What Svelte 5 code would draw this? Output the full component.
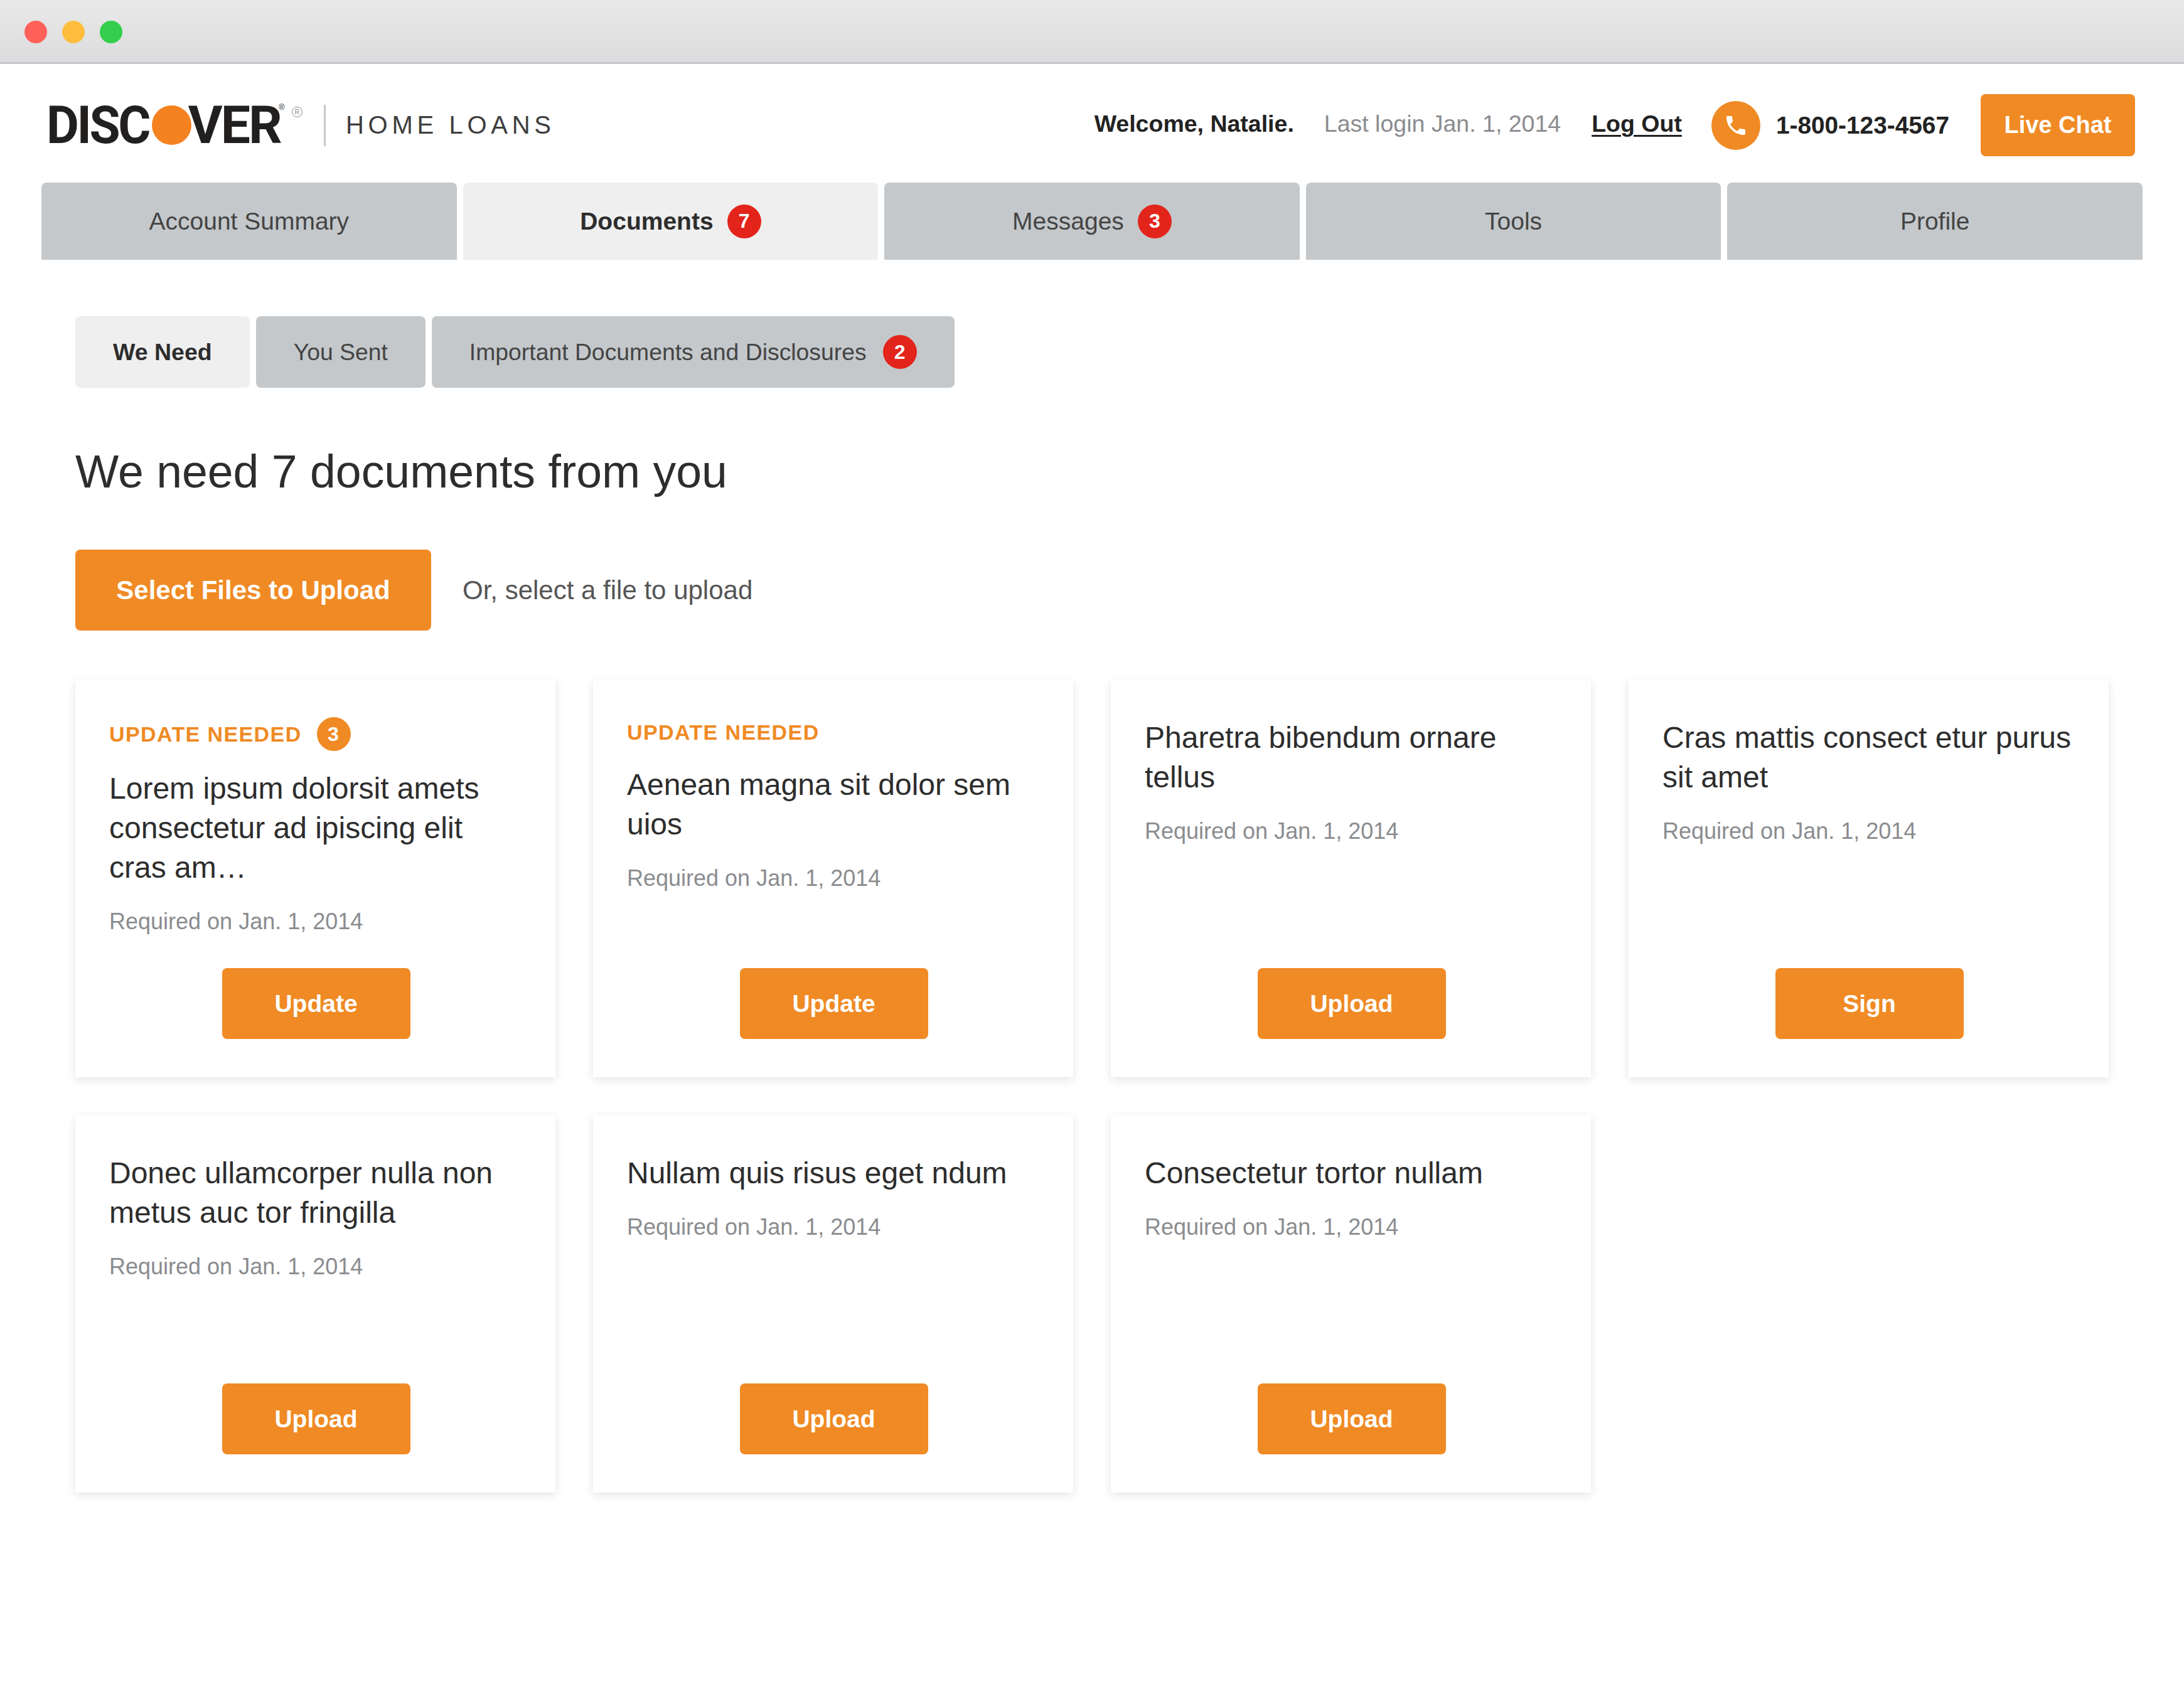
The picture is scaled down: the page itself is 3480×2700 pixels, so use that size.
<script>
	const mainTabs = [
		{ title: 'Account Summary' },
		{ title: 'Documents', count: 7, active: true },
		{ title: 'Messages', count: 3 },
		{ title: 'Tools' },
		{ title: 'Profile' }
	];

	const subTabs = [
		{ title: 'We Need', active: true },
		{ title: 'You Sent' },
		{ title: 'Important Documents and Disclosures', count: 2 }
	];

	const docs = [
		{ flag: true, flagCount: 3, title: 'Lorem ipsum dolorsit amets consectetur ad ipiscing elit cras am…', action: 'Update' },
		{ flag: true, title: 'Aenean magna sit dolor sem uios', action: 'Update' },
		{ title: 'Pharetra bibendum ornare tellus', action: 'Upload' },
		{ title: 'Cras mattis consect etur purus sit amet', action: 'Sign' },
		{ title: 'Donec ullamcorper nulla non metus auc tor fringilla', action: 'Upload' },
		{ title: 'Nullam quis risus eget ndum', action: 'Upload' },
		{ title: 'Consectetur tortor nullam', action: 'Upload' }
	];
</script>

<div class="titlebar">
	<span class="dot red"></span>
	<span class="dot yellow"></span>
	<span class="dot green"></span>
</div>

<header>
	<div class="brand">
		<div class="logo">
			<span class="word">DISC</span>
			<span class="ball"></span>
			<span class="word ver">VER</span>
			<span class="reg-small">®</span>
			<span class="reg">R</span>
		</div>
		<span class="home">HOME LOANS</span>
	</div>
	<div class="account">
		<strong class="welcome">Welcome, Natalie.</strong>
		<span class="login">Last login Jan. 1, 2014</span>
		<a class="logout" href="#top">Log Out</a>
		<span class="phone-icon">
			<svg viewBox="0 0 24 24" width="40" height="40"><path fill="#fff" d="M6.62 10.79c1.44 2.83 3.76 5.14 6.59 6.59l2.2-2.2c.27-.27.67-.36 1.02-.24 1.12.37 2.33.57 3.57.57.55 0 1 .45 1 1V20c0 .55-.45 1-1 1-9.39 0-17-7.61-17-17 0-.55.45-1 1-1h3.5c.55 0 1 .45 1 1 0 1.25.2 2.45.57 3.57.11.35.03.74-.25 1.02l-2.2 2.2z"/></svg>
		</span>
		<strong class="number">1-800-123-4567</strong>
		<button class="btn chat">Live Chat</button>
	</div>
</header>

<nav class="tabs">
	{#each mainTabs as tab}
		<div class="tab" class:active={tab.active}>
			<span>{tab.title}</span>
			{#if tab.count}<span class="count">{tab.count}</span>{/if}
		</div>
	{/each}
</nav>

<main>
	<div class="subtabs">
		{#each subTabs as tab}
			<div class="subtab" class:active={tab.active}>
				<span>{tab.title}</span>
				{#if tab.count}<span class="count">{tab.count}</span>{/if}
			</div>
		{/each}
	</div>

	<h1>We need 7 documents from you</h1>

	<div class="upload-row">
		<button class="btn select">Select Files to Upload</button>
		<span class="hint">Or, select a file to upload</span>
	</div>

	<div class="cards">
		{#each docs as doc}
			<article class="card">
				{#if doc.flag}
					<div class="flag" class:tall={doc.flagCount}>
						<span>UPDATE NEEDED</span>
						{#if doc.flagCount}<span class="count orange">{doc.flagCount}</span>{/if}
					</div>
				{/if}
				<h2>{doc.title}</h2>
				<p>Required on Jan. 1, 2014</p>
				<button class="btn action">{doc.action}</button>
			</article>
		{/each}
	</div>
</main>

<style>
	:global(body) {
		margin: 0;
		background: #fff;
		font-family: "Liberation Sans", Arial, sans-serif;
		color: #2d2d2d;
	}

	.titlebar {
		height: 96px;
		display: flex;
		align-items: center;
		gap: 24px;
		padding: 3px 0 0 39px;
		background: linear-gradient(#e9e9e9, #dcdcde);
		border-bottom: 3px solid #c8c8ca;
	}

	.dot {
		width: 36px;
		height: 36px;
		border-radius: 50%;
	}

	.red { background: #ff6159; }
	.yellow { background: #ffbd3e; }
	.green { background: #33cf4d; }

	header {
		display: flex;
		justify-content: space-between;
		align-items: center;
		padding: 48px 78px 42px 78px;
	}

	.brand {
		display: flex;
		align-items: center;
	}

	.logo {
		display: flex;
		align-items: center;
		position: relative;
		width: 441px;
		height: 66px;
		border-right: 3px solid #c8c8c8;
		box-sizing: border-box;
	}

	.word {
		margin: 0 -9px 0 -4px;
		font-family: Roboto, sans-serif;
		font-weight: 700;
		font-size: 84px;
		line-height: 66px;
		letter-spacing: -3.5px;
		color: #221f1f;
		transform: scaleX(0.95);
		transform-origin: left center;
	}

	.word.ver {
		margin: 0 0 0 -5px;
		letter-spacing: -3px;
		transform: none;
		position: relative;
	}

	.ball {
		width: 63px;
		height: 63px;
		margin-left: 5px;
		border-radius: 50%;
		background: #f58220;
		flex: none;
	}

	.reg-small {
		position: absolute;
		left: 366px;
		top: -4px;
		font-size: 13px;
		color: #221f1f;
	}

	.reg {
		position: absolute;
		left: 387px;
		top: 3px;
		width: 17px;
		height: 17px;
		box-sizing: border-box;
		border: 1.5px solid #8a8a8a;
		border-radius: 50%;
		font-size: 11px;
		line-height: 14px;
		text-align: center;
		color: #8a8a8a;
	}

	.home {
		margin-left: 32px;
		font-size: 40px;
		letter-spacing: 6.7px;
		color: #3d3d3d;
	}

	.account {
		display: flex;
		align-items: center;
		font-size: 37.5px;
	}

	.welcome,
	.login,
	.logout {
		margin-bottom: 4px;
	}

	.welcome {
		color: #222;
	}

	.login {
		margin-left: 48px;
		color: #8a8c8f;
	}

	.logout {
		margin-left: 49px;
		font-weight: 700;
		color: #222;
		text-decoration: underline;
		text-underline-offset: 5px;
		text-decoration-thickness: 3px;
	}

	.phone-icon {
		width: 78px;
		height: 78px;
		margin-left: 47px;
		border-radius: 50%;
		background: #f08a24;
		display: flex;
		align-items: center;
		justify-content: center;
	}

	.number {
		margin-left: 25px;
		font-size: 38.8px;
		color: #222;
	}

	.btn {
		border: 0;
		padding: 0;
		background: #f08a24;
		color: #fff;
		font-family: inherit;
		font-weight: 700;
		border-radius: 8px;
	}

	.chat {
		width: 246px;
		height: 99px;
		margin-left: 50px;
		font-size: 38px;
	}

	.tabs {
		display: grid;
		grid-template-columns: repeat(5, 1fr);
		gap: 10px;
		margin: 0 66px;
	}

	.tab {
		height: 123px;
		display: flex;
		align-items: center;
		justify-content: center;
		gap: 10px;
		background: #c4c8cb;
		border-radius: 8px 8px 0 0;
		font-size: 39px;
		color: #444;
	}

	.tab.active,
	.subtab.active {
		background: #efefef;
		font-weight: 700;
		color: #2d2d2d;
	}

	.count {
		width: 54px;
		height: 54px;
		margin-left: 12px;
		border-radius: 50%;
		background: #e3241b;
		color: #fff;
		font-size: 32px;
		font-weight: 700;
		display: flex;
		align-items: center;
		justify-content: center;
		flex: none;
	}

	.count.orange {
		background: #f08a24;
		margin-left: 24px;
	}

	main {
		padding: 90px 120px 120px;
	}

	.subtabs {
		display: flex;
		gap: 10px;
	}

	.subtab {
		height: 114px;
		padding: 0 60px;
		display: flex;
		align-items: center;
		background: #c4c8cb;
		border-radius: 8px;
		font-size: 37.35px;
		color: #444;
	}

	.subtab.active {
		font-size: 37.5px;
	}

	.subtab .count {
		margin: 0 0 0 26px;
	}

	h1 {
		margin: 89px 0 0;
		font-size: 73.4px;
		line-height: 90px;
		font-weight: 400;
		color: #2d2d2d;
	}

	.upload-row {
		display: flex;
		align-items: center;
		margin-top: 79px;
	}

	.select {
		width: 567px;
		height: 129px;
		font-size: 42px;
	}

	.hint {
		margin-left: 50px;
		font-size: 42px;
		color: #555;
	}

	.cards {
		display: grid;
		grid-template-columns: repeat(4, 765px);
		gap: 60px;
		margin-top: 78px;
	}

	.card {
		min-height: 602px;
		box-sizing: border-box;
		padding: 60px 52px 61px 54px;
		display: flex;
		flex-direction: column;
		background: #fff;
		box-shadow: 0 4px 14px rgba(0, 0, 0, 0.11);
	}

	.flag {
		height: 48px;
		margin-bottom: 28px;
		display: flex;
		align-items: center;
		font-size: 34px;
		font-weight: 700;
		letter-spacing: 1.4px;
		color: #f08a24;
	}

	.flag.tall {
		height: 54px;
		margin-bottom: 28px;
	}

	h2 {
		margin: 1px 0 0;
		font-size: 48px;
		line-height: 63px;
		font-weight: 400;
		color: #2d2d2d;
	}

	.flag + h2 {
		margin-top: 0;
	}

	p {
		margin: 30px 0 49px;
		font-size: 36px;
		line-height: 50px;
		color: #8a8c8f;
	}

	.action {
		width: 300px;
		height: 113px;
		margin: auto auto 0;
		font-size: 39px;
	}
</style>
